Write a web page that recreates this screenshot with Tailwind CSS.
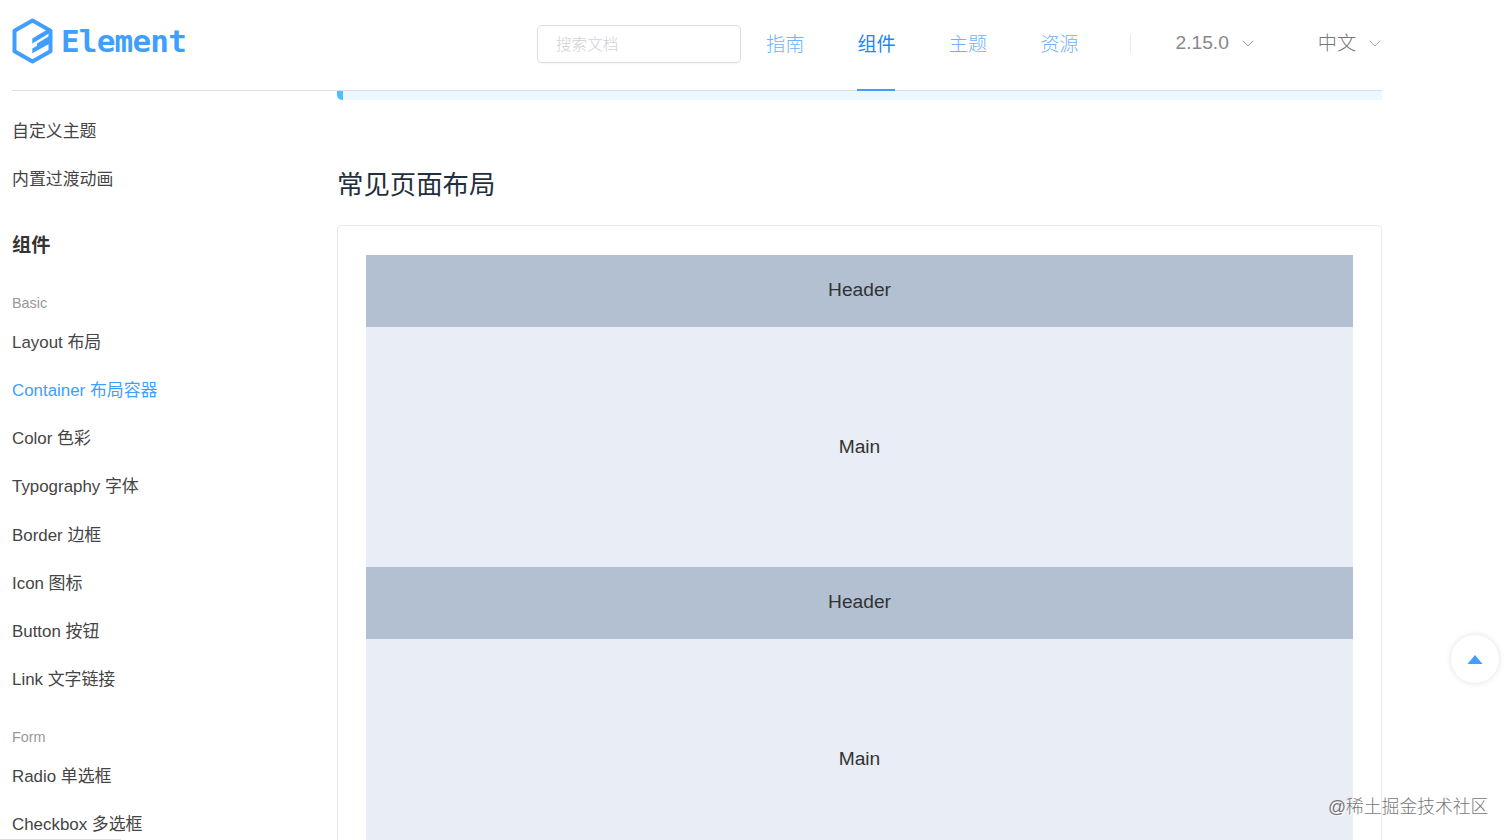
<!DOCTYPE html>
<html lang="zh-CN">
  <head>
    <meta charset="UTF-8" />
    <meta name="viewport" content="width=device-width, initial-scale=1.0" />
    <title>Element</title>
    <script src="https://cdn.jsdelivr.net/npm/@tailwindcss/browser@4"></script>
  </head>
  <body class="relative flex h-screen flex-col overflow-hidden bg-white pl-3 font-['Liberation_Sans','Noto_Sans_CJK_SC',sans-serif]">
    <!-- Header -->
    <header class="flex h-[91px] w-[1370px] shrink-0 items-center border-b border-[#dcdfe6]">
      <a href="#" class="flex w-[525px] items-center pb-2 text-[#409eff]">
        <svg class="h-[46px] w-[41px] shrink-0" viewBox="0 0 41 46" fill="none">
          <path d="M20.5 2.6 38.5 12.8V33.2L20.5 43.4 2.5 33.2V12.8Z" stroke="currentColor" stroke-width="4" stroke-linejoin="round" />
          <path d="M20.3 20.6 37 10.6V15.4L20.3 25.4ZM25 25.4 38 17.6V21.8L25 29.2ZM20.3 30.5 37 21.1V25.9L20.3 35.3Z" fill="currentColor" />
        </svg>
        <span class="ml-2 font-['DejaVu_Sans_Mono'] text-[31px] leading-[46px] font-bold tracking-[-0.8px]">Element</span>
      </a>
      <div class="mb-[3px] flex h-[38px] w-[204px] items-center rounded-[5px] border border-[#dcdfe6] px-[18px] pt-0.5 text-[15.6px] font-light text-[#cfd2d9] shadow-xs">搜索文档</div>
      <nav class="flex h-full items-center pb-1 text-[19.2px] whitespace-nowrap">
        <a href="#" class="ml-[25px] pt-[5px] font-light text-[#6fb1fb]">指南</a>
        <a href="#" class="relative ml-[53px] pt-[5px] text-[#1989fa]">组件<span class="absolute top-[63px] left-0 h-0.5 w-[38px] bg-[#409eff]"></span></a>
        <a href="#" class="ml-[53px] pt-[5px] font-light text-[#6fb1fb]">主题</a>
        <a href="#" class="ml-[53px] pt-[5px] font-light text-[#6fb1fb]">资源</a>
        <span class="ml-[51px] h-[19px] w-px bg-[#ebebeb]"></span>
        <span class="ml-[45px] text-[#888]">2.15.0</span>
        <svg class="ml-[13px] h-[7px] w-3" viewBox="0 0 12 7" fill="none" stroke="#999"><path d="M.8.8 6 6 11.2.8" /></svg>
        <span class="ml-[64px] pt-[3px] font-light text-[#777]">中文</span>
        <svg class="ml-[13px] h-[7px] w-3" viewBox="0 0 12 7" fill="none" stroke="#aaa"><path d="M.8.8 6 6 11.2.8" /></svg>
      </nav>
    </header>

    <div class="flex min-h-0 flex-1">
      <!-- Sidebar -->
      <aside class="w-[325px] shrink-0 pt-[17px] text-[16.9px] leading-[48.05px] text-[#444]">
        <a href="#" class="block">自定义主题</a>
        <a href="#" class="block">内置过渡动画</a>
        <h2 class="mt-[18px] text-[19.2px] font-bold text-[#333]">组件</h2>
        <h3 class="mt-[18px] text-[14.4px] leading-[31.2px] text-[#999]">Basic</h3>
        <a href="#" class="block">Layout 布局</a>
        <a href="#" class="block text-[#409eff]">Container 布局容器</a>
        <a href="#" class="block">Color 色彩</a>
        <a href="#" class="block">Typography 字体</a>
        <a href="#" class="block">Border 边框</a>
        <a href="#" class="block">Icon 图标</a>
        <a href="#" class="block">Button 按钮</a>
        <a href="#" class="block">Link 文字链接</a>
        <h3 class="mt-[18px] text-[14.4px] leading-[31.2px] text-[#999]">Form</h3>
        <a href="#" class="block">Radio 单选框</a>
        <a href="#" class="block">Checkbox 多选框</a>
      </aside>

      <!-- Content -->
      <main class="w-[1045px] shrink-0">
        <div class="h-[9px] rounded-bl-[5px] border-l-[6px] border-[#50bfff] bg-[#ecf8ff]"></div>
        <h1 class="mt-[65px] text-[26.4px] leading-[40px] text-[#1f2f3d]">常见页面布局</h1>
        <div class="mt-5 h-[640px] rounded-[4px] border border-[#ebebeb] p-7 pt-[29px] text-center text-[19.2px] text-[#333]">
          <div class="h-[72px] bg-[#b3c0d1] leading-[70px]">Header</div>
          <div class="h-60 bg-[#e9edf5] leading-60">Main</div>
          <div class="h-[72px] bg-[#b3c0d1] leading-[70px]">Header</div>
          <div class="h-60 bg-[#e9edf5] leading-60">Main</div>
        </div>
      </main>
    </div>

    <!-- Back to top -->
    <a href="#" class="absolute top-[635px] left-[1451px] flex size-12 items-center justify-center rounded-full bg-white shadow-[0_0_6px_rgba(0,0,0,0.12)]">
      <svg class="h-[9px] w-4" viewBox="0 0 16 9" fill="#409eff"><path d="M8 0 15.5 9H.5Z" /></svg>
    </a>
    <span class="absolute top-[794px] left-[1328px] text-[17.8px] leading-[27px] font-light whitespace-nowrap text-[#777] [text-shadow:1px_1px_0_#fff]">@稀土掘金技术社区</span>
    <div class="absolute bottom-0 left-0 h-px w-[121px] bg-[#dadce0]"></div>
  </body>
</html>
